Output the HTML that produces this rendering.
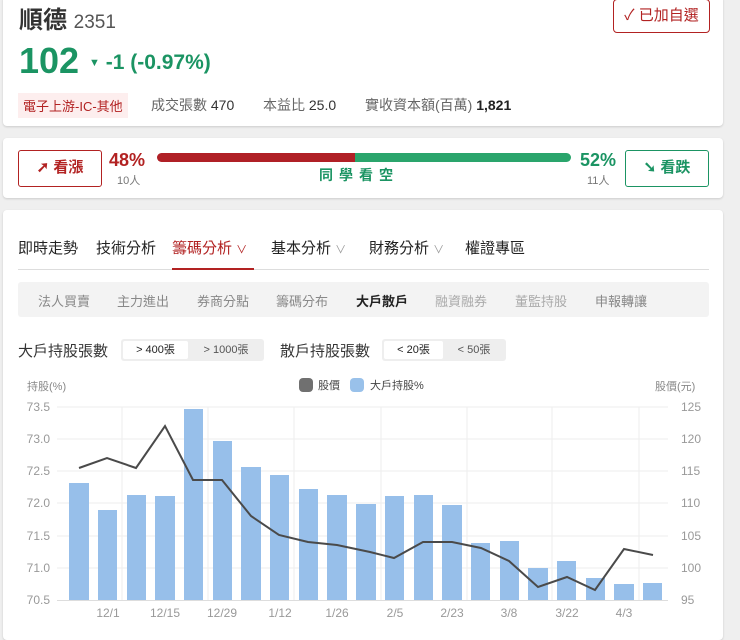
<!DOCTYPE html>
<html><head><meta charset="utf-8"><style>
*{margin:0;padding:0;box-sizing:border-box}
body{width:740px;height:628px;overflow:hidden;background:#efefef;font-family:"Liberation Sans","Noto Sans CJK TC",sans-serif;color:#222;position:relative}
.card{position:absolute;left:3px;width:720px;background:#fff;border-radius:4px;box-shadow:0 1px 2px rgba(0,0,0,.15)}
.a{position:absolute;white-space:nowrap}
</style></head><body>
<div class="card" style="top:-4px;height:130px">
 <div class="a" style="left:16px;top:4px;font-size:24px;font-weight:bold;color:#333">順德 <span style="font-size:19px;font-weight:normal;color:#555">2351</span></div>
 <div class="a" style="left:610px;top:3px;width:97px;height:34px;border:1px solid #b22222;border-radius:4px;color:#b22222;font-size:15px;line-height:32px;text-align:center">✓ 已加自選</div>
 <div class="a" style="left:16px;top:44px;font-size:36px;font-weight:bold;color:#1b9463">102</div>
 <div class="a" style="left:86px;top:55px;font-size:21px;font-weight:bold;color:#1b9463"><span style="font-size:11px;vertical-align:3px">▼</span> -1 (-0.97%)</div>
 <div class="a" style="left:15px;top:97px;background:#fdeeee;color:#b22222;font-size:13px;padding:3px 5px">電子上游-IC-其他</div>
 <div class="a" style="left:148px;top:99px;font-size:14px;color:#666">成交張數 <span style="color:#333">470</span></div>
 <div class="a" style="left:260px;top:99px;font-size:14px;color:#666">本益比 <span style="color:#333">25.0</span></div>
 <div class="a" style="left:362px;top:99px;font-size:14px;color:#666">實收資本額(百萬) <b style="color:#222">1,821</b></div>
</div>
<div class="card" style="top:138px;height:60px">
 <div class="a" style="left:15px;top:12px;width:84px;height:37px;border:1.5px solid #b22222;border-radius:3px;color:#b22222;font-size:15px;line-height:34px;text-align:center;font-weight:bold">➚ 看漲</div>
 <div class="a" style="left:106px;top:12px;font-size:18px;font-weight:bold;color:#b22222">48%</div>
 <div class="a" style="left:114px;top:34px;font-size:11px;color:#777">10人</div>
 <div class="a" style="left:154px;top:15px;width:198px;height:9px;background:#b02026;border-radius:5px 0 0 5px"></div>
 <div class="a" style="left:352px;top:15px;width:216px;height:9px;background:#2aa56c;border-radius:0 5px 5px 0"></div>
 <div class="a" style="left:316px;top:27px;font-size:14px;color:#1b9463;letter-spacing:6px;font-weight:bold">同學看空</div>
 <div class="a" style="left:577px;top:12px;font-size:18px;font-weight:bold;color:#1b9463">52%</div>
 <div class="a" style="left:584px;top:34px;font-size:11px;color:#777">11人</div>
 <div class="a" style="left:622px;top:12px;width:84px;height:37px;border:1.5px solid #1b9463;border-radius:3px;color:#1b9463;font-size:15px;line-height:34px;text-align:center;font-weight:bold">➘ 看跌</div>
</div>
<div class="card" style="top:210px;height:430px">
 <div class="a" style="left:15px;top:27px;font-size:15px;color:#222">即時走勢</div>
 <div class="a" style="left:93px;top:27px;font-size:15px;color:#222">技術分析</div>
 <div class="a" style="left:169px;top:27px;font-size:15px;color:#b22222">籌碼分析 <span style="font-size:11px">∨</span></div>
 <div class="a" style="left:268px;top:27px;font-size:15px;color:#222">基本分析 <span style="font-size:11px;color:#999">∨</span></div>
 <div class="a" style="left:366px;top:27px;font-size:15px;color:#222">財務分析 <span style="font-size:11px;color:#999">∨</span></div>
 <div class="a" style="left:462px;top:27px;font-size:15px;color:#222">權證專區</div>
 <div class="a" style="left:15px;top:59px;width:691px;height:1px;background:#ddd"></div>
 <div class="a" style="left:169px;top:58px;width:82px;height:2px;background:#b22222"></div>
 <div class="a" style="left:15px;top:72px;width:691px;height:35px;background:#f3f3f3;border-radius:3px"></div>
 <div class="a" style="left:35px;top:81px;font-size:13px;color:#888">法人買賣</div>
 <div class="a" style="left:114px;top:81px;font-size:13px;color:#888">主力進出</div>
 <div class="a" style="left:194px;top:81px;font-size:13px;color:#888">券商分點</div>
 <div class="a" style="left:273px;top:81px;font-size:13px;color:#888">籌碼分布</div>
 <div class="a" style="left:353px;top:81px;font-size:13px;color:#222;font-weight:bold">大戶散戶</div>
 <div class="a" style="left:432px;top:81px;font-size:13px;color:#aaa">融資融券</div>
 <div class="a" style="left:512px;top:81px;font-size:13px;color:#aaa">董監持股</div>
 <div class="a" style="left:592px;top:81px;font-size:13px;color:#888">申報轉讓</div>
 <div class="a" style="left:15px;top:130px;font-size:15px;color:#333">大戶持股張數</div>
 <div class="a" style="left:118px;top:129px;width:143px;height:22px;background:#eee;border-radius:3px"></div>
 <div class="a" style="left:120px;top:131px;width:65px;height:18px;background:#fff;border-radius:2px;font-size:11px;line-height:18px;text-align:center">&gt; 400張</div>
 <div class="a" style="left:188px;top:131px;width:70px;font-size:11px;line-height:18px;text-align:center;color:#555">&gt; 1000張</div>
 <div class="a" style="left:277px;top:130px;font-size:15px;color:#333">散戶持股張數</div>
 <div class="a" style="left:379px;top:129px;width:124px;height:22px;background:#eee;border-radius:3px"></div>
 <div class="a" style="left:381px;top:131px;width:59px;height:18px;background:#fff;border-radius:2px;font-size:11px;line-height:18px;text-align:center">&lt; 20張</div>
 <div class="a" style="left:442px;top:131px;width:58px;font-size:11px;line-height:18px;text-align:center;color:#555">&lt; 50張</div>
</div>
<svg class="a" style="left:0;top:370px" width="740" height="258" viewBox="0 370 740 258" font-family="Liberation Sans,Noto Sans CJK TC,sans-serif">
<g fill="#888" font-size="11">
<text x="27" y="390">持股(%)</text>
<text x="655" y="390">股價(元)</text>
<rect x="299" y="378" width="14" height="14" rx="4" fill="#707070"/><text x="318" y="389" fill="#444">股價</text>
<rect x="350" y="378" width="14" height="14" rx="4" fill="#99c1ea"/><text x="370" y="389" fill="#444">大戶持股%</text>
</g>
<g stroke="#eee" stroke-width="1">
<line x1="57" x2="668" y1="407" y2="407"/><line x1="57" x2="668" y1="439" y2="439"/><line x1="57" x2="668" y1="471" y2="471"/><line x1="57" x2="668" y1="503" y2="503"/><line x1="57" x2="668" y1="536" y2="536"/><line x1="57" x2="668" y1="568" y2="568"/>
<line x1="122" x2="122" y1="407" y2="600"/><line x1="208" x2="208" y1="407" y2="600"/><line x1="294" x2="294" y1="407" y2="600"/><line x1="381" x2="381" y1="407" y2="600"/><line x1="467" x2="467" y1="407" y2="600"/><line x1="552" x2="552" y1="407" y2="600"/><line x1="639" x2="639" y1="407" y2="600"/>
</g>
<line x1="57" x2="668" y1="600.5" y2="600.5" stroke="#ddd"/>
<g fill="#97bfea">
<rect x="69" y="483" width="20" height="117"/><rect x="98" y="510" width="19" height="90"/><rect x="127" y="495" width="19" height="105"/><rect x="155" y="496" width="20" height="104"/><rect x="184" y="409" width="19" height="191"/><rect x="213" y="441" width="19" height="159"/><rect x="241" y="467" width="20" height="133"/><rect x="270" y="475" width="19" height="125"/><rect x="299" y="489" width="19" height="111"/><rect x="327" y="495" width="20" height="105"/><rect x="356" y="504" width="20" height="96"/><rect x="385" y="496" width="19" height="104"/><rect x="414" y="495" width="19" height="105"/><rect x="442" y="505" width="20" height="95"/><rect x="471" y="543" width="19" height="57"/><rect x="500" y="541" width="19" height="59"/><rect x="528" y="568" width="20" height="32"/><rect x="557" y="561" width="19" height="39"/><rect x="586" y="578" width="19" height="22"/><rect x="614" y="584" width="20" height="16"/><rect x="643" y="583" width="19" height="17"/>
</g>
<polyline fill="none" stroke="#4a4a4a" stroke-width="2" points="79,468 107,458 136,468 165,426 193,480 222,480 251,516 279,535 308,542 337,545 370,552 394,558 423,542 452,542 481,548 509,561 538,587 567,577 595,590 624,549 653,555"/>
<g fill="#999" font-size="12" text-anchor="end">
<text x="50" y="411">73.5</text><text x="50" y="443">73.0</text><text x="50" y="475">72.5</text><text x="50" y="507">72.0</text><text x="50" y="540">71.5</text><text x="50" y="572">71.0</text><text x="50" y="604">70.5</text>
</g>
<g fill="#999" font-size="12">
<text x="681" y="411">125</text><text x="681" y="443">120</text><text x="681" y="475">115</text><text x="681" y="507">110</text><text x="681" y="540">105</text><text x="681" y="572">100</text><text x="681" y="604">95</text>
</g>
<g fill="#999" font-size="12" text-anchor="middle">
<text x="108" y="617">12/1</text><text x="165" y="617">12/15</text><text x="222" y="617">12/29</text><text x="280" y="617">1/12</text><text x="337" y="617">1/26</text><text x="395" y="617">2/5</text><text x="452" y="617">2/23</text><text x="509" y="617">3/8</text><text x="567" y="617">3/22</text><text x="624" y="617">4/3</text>
</g>
</svg>
</body></html>
